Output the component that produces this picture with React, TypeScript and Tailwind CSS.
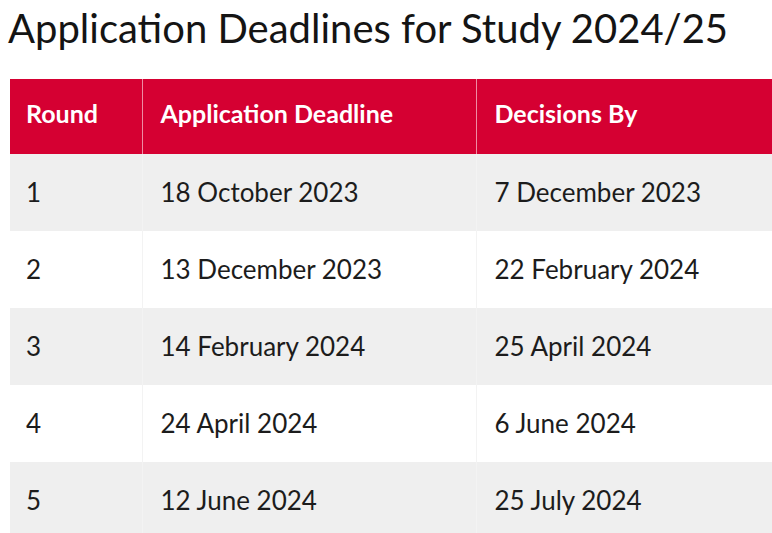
import React from "react";

interface IRow {
    round: string;
    deadline: string;
    decision: string;
}

const rows: IRow[] = [
    { round: "1", deadline: "18 October 2023", decision: "7 December 2023" },
    { round: "2", deadline: "13 December 2023", decision: "22 February 2024" },
    { round: "3", deadline: "14 February 2024", decision: "25 April 2024" },
    { round: "4", deadline: "24 April 2024", decision: "6 June 2024" },
    { round: "5", deadline: "12 June 2024", decision: "25 July 2024" },
];

function App(): React.ReactElement {
    return (
        <div className="w-[772px] h-[533px] overflow-hidden bg-white font-['Lato',sans-serif] text-[#1c1c1c]">
            <h1 className="pl-[8px] pt-[4px] h-[79px] text-[40px] leading-[48px] font-normal text-[#141414]">Application Deadlines for Study 2024/25</h1>
            <table className="ml-[10px] w-[762px] border-collapse table-fixed">
                <colgroup>
                    <col className="w-[132px]" />
                    <col className="w-[334px]" />
                    <col />
                </colgroup>
                <thead>
                    <tr className="bg-[#d50032] text-white h-[75px] text-[25px] font-bold text-left">
                        <th className="pl-[16px] pb-[6px] font-bold">Round</th>
                        <th className="pl-[18px] pb-[6px] border-l border-[#ee8ca3] font-bold">Application Deadline</th>
                        <th className="pl-[18px] pb-[6px] border-l border-[#ee8ca3] font-bold">Decisions By</th>
                    </tr>
                </thead>
                <tbody>
                    {rows.map((row, i) => (
                        <tr key={row.round} className={(i % 2 == 0 ? "bg-[#efefef]" : "bg-white") + " h-[77px] text-[26px]"}>
                            <td className="pl-[16px]">{row.round}</td>
                            <td className="pl-[18px] border-l border-[#f3f3f3]">{row.deadline}</td>
                            <td className="pl-[18px] border-l border-[#f3f3f3]">{row.decision}</td>
                        </tr>
                    ))}
                </tbody>
            </table>
        </div>
    );
}

export default App;
